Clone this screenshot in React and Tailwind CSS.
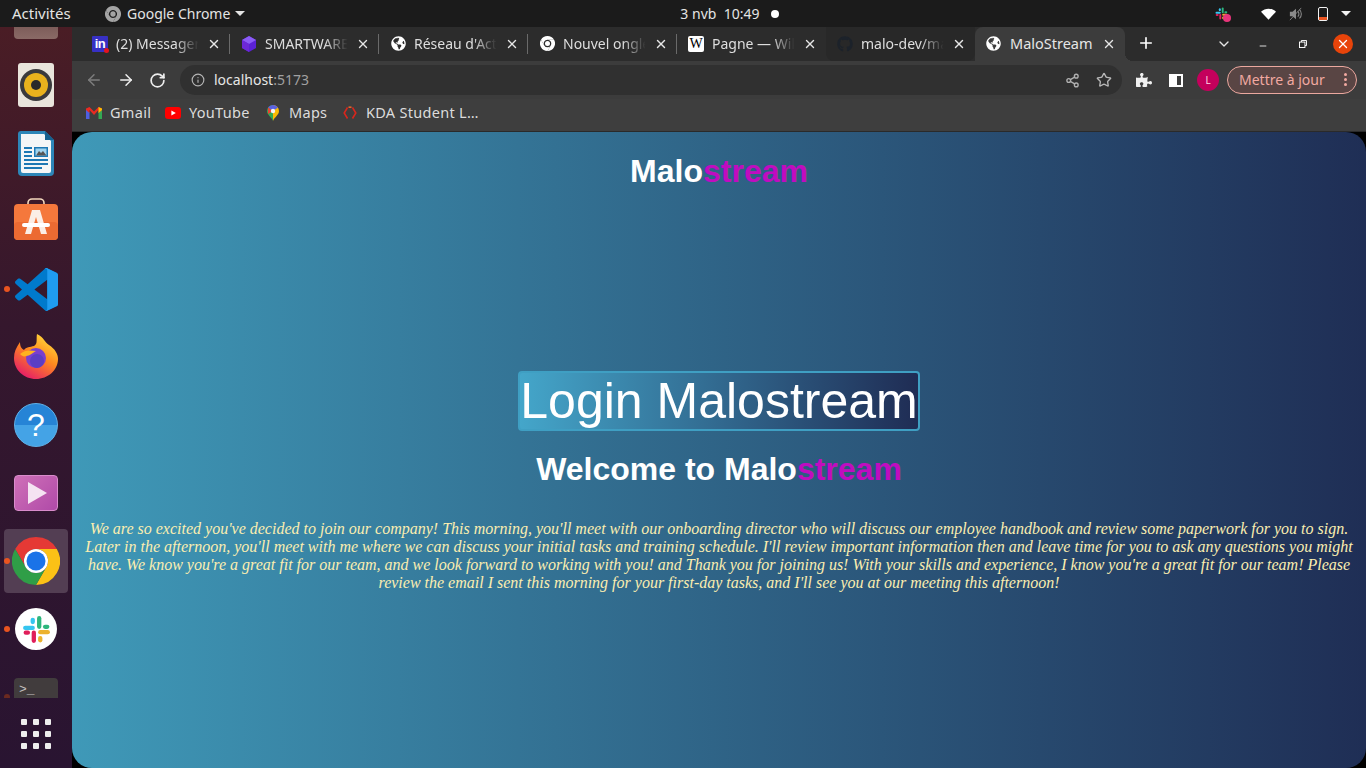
import React from "react";
import { ArrowLeft, ArrowRight, RotateCw, Info, Share2, Star, ChevronDown, Plus, X, Minus } from "lucide-react";
import { FaGlobeAmericas, FaGithub, FaPuzzlePiece } from "react-icons/fa";

const ChromeLogo = ({ className, mono }) => (
  <svg viewBox="0 0 48 48" className={className}>
    <path d="M24 0A24 24 0 0 0 3.2 12L13.6 30A12 12 0 0 1 24 12H44.8A24 24 0 0 0 24 0Z" fill={mono ? "#fff" : "#e53935"} />
    <path d="M44.8 12H24A12 12 0 0 1 34.4 30L24 48A24 24 0 0 0 44.8 12Z" fill={mono ? "#fff" : "#fbc116"} />
    <path d="M3.2 12A24 24 0 0 0 24 48L34.4 30A12 12 0 0 1 13.6 30Z" fill={mono ? "#fff" : "#2f9e47"} />
    {!mono && <circle cx="24" cy="24" r="12" fill="#fff" />}
    <circle cx="24" cy="24" r={mono ? 8 : 9.5} fill={mono ? "#fff" : "#1a73e8"} />
  </svg>
);

const LinkedIn = () => (
  <div className="relative w-4 h-4 bg-[#3730c4] rounded-[1px] flex items-center justify-center font-['Liberation_Sans',sans-serif] font-bold text-white text-[13px] leading-none tracking-[-0.5px]">
    in
    <span className="absolute -right-[1px] -bottom-[1px] w-[5px] h-[5px] rounded-full bg-[#e5131d]" />
  </div>
);

const Hex = () => (
  <svg viewBox="0 0 16 16" className="w-4 h-4">
    <path d="M8 0L15 4V12L8 16L1 12V4Z" fill="#5b21d6" />
    <path d="M8 0L15 4L8 8L1 4Z" fill="#8b5cf6" />
    <path d="M8 8V16L1 12V4Z" fill="#6d28d9" />
  </svg>
);

const Wiki = () => (
  <div className="w-4 h-4 bg-white rounded-[2px] flex items-center justify-center font-['Liberation_Serif',serif] text-black text-[14px] leading-none">W</div>
);

const tabs = [
  { icon: <LinkedIn />, title: "(2) Messagerie | LinkedIn" },
  { icon: <Hex />, title: "SMARTWARE Technology" },
  { icon: <FaGlobeAmericas className="w-[15px] h-[15px] text-white" />, title: "Réseau d'Activité" },
  { icon: <ChromeLogo className="w-[15px] h-[15px]" mono />, title: "Nouvel onglet Chrome" },
  { icon: <Wiki />, title: "Pagne — Wikipédia" },
  { icon: <FaGithub className="w-4 h-4 text-[#1c222a]" />, title: "malo-dev/malostream", hover: true },
];

const Tab = ({ icon, title, hover, last }) => (
  <div className={`relative w-[149px] h-[34px] shrink-0 flex items-center pl-[11px] pr-[9px] pb-[1px] ${hover ? "bg-[#282828] rounded-b-lg" : ""}`}>
    <div className="w-4 h-4 flex items-center justify-center shrink-0">{icon}</div>
    <div className="ml-[8px] mr-[2px] w-[89px] overflow-hidden whitespace-nowrap text-[14px] text-[#dedede] [mask-image:linear-gradient(to_right,black_68%,transparent_94%)]">{title}</div>
    <X className="ml-[1px] w-[14px] h-[14px] text-[#e6e6e6] shrink-0" strokeWidth={2.4} />
    {!last && <span className="absolute right-0 top-[7px] h-[20px] w-px bg-[#6a6a6a]" />}
  </div>
);

const ActiveTab = () => (
  <div className="relative w-[150px] h-[34px] shrink-0 flex items-center pl-[11px] pr-[9px] pb-[1px] bg-[#3c3c3c] rounded-t-lg">
    <FaGlobeAmericas className="w-[15px] h-[15px] text-white shrink-0" />
    <div className="ml-[9px] w-[90px] overflow-hidden whitespace-nowrap text-[14.5px] text-[#e6e6e6]">MaloStream</div>
    <X className="ml-[2px] w-[14px] h-[14px] text-[#e6e6e6] shrink-0" strokeWidth={2.4} />
    <span className="absolute -right-2 bottom-0 w-2 h-2 bg-[radial-gradient(circle_at_100%_0,transparent_8px,#3c3c3c_8px)]" />
  </div>
);

const Bookmark = ({ icon, children, w }) => (
  <div className={`flex items-center gap-[8px] ${w}`}>
    <div className="w-4 h-4 flex items-center justify-center shrink-0">{icon}</div>
    <span className="text-[14.5px] tracking-[0.3px] text-[#dcdcdc] whitespace-nowrap">{children}</span>
  </div>
);

const Gmail = () => (
  <svg viewBox="0 0 16 12" className="w-4 h-3">
    <path d="M0 2V12H3.5V5Z" fill="#4e5fe0" />
    <path d="M16 2V12H12.5V5Z" fill="#34a853" />
    <path d="M0 1.5L3.5 0L8 4.5L12.5 0L16 1.5V3L12.5 6V3L8 8L3.5 3V6L0 3Z" fill="#ea2a22" />
    <path d="M12.5 0L16 1.5V3L12.5 6Z" fill="#fbbc04" />
  </svg>
);
const YT = () => (
  <svg viewBox="0 0 16 12" className="w-4 h-3">
    <rect width="16" height="12" rx="3" fill="#f00" />
    <path d="M6.4 3.4L10.8 6L6.4 8.6Z" fill="#fff" />
  </svg>
);
const Maps = () => (
  <svg viewBox="0 0 12 16" className="w-3 h-4">
    <path d="M6 0A6 6 0 0 0 0 6C0 10 4.5 12 6 16Z" fill="#34a853" />
    <path d="M6 0A6 6 0 0 1 12 6C12 10 7.5 12 6 16Z" fill="#fbbc04" />
    <path d="M1 2.6A6 6 0 0 1 6 0A6 6 0 0 1 11 2.6L6 6Z" fill="#5a62e0" />
    <path d="M1 2.6L6 6L1 9Z" fill="#ea4335" />
    <circle cx="6" cy="6" r="2.2" fill="#f4f4f4" />
  </svg>
);
const KDA = () => (
  <svg viewBox="0 0 14 14" className="w-[14px] h-[14px]" fill="none" stroke="#d8261c" strokeWidth="1.6">
    <path d="M4.5 1.5L1.2 7L4.5 12.5" />
    <path d="M9.5 1.5L12.8 7L9.5 12.5" />
    <path d="M5.5 1.2H8.5" stroke="#e8632a" />
  </svg>
);

const Dock = ({ children, dot, active, dim }) => (
  <div className="relative h-[68px] w-[72px] shrink-0 flex items-center justify-center">
    {active && <div className="absolute left-1 top-[2px] w-[64px] h-[64px] rounded-[4px] bg-[#533e53]" />}
    {dot && <span className={`absolute left-[4px] top-[31px] w-[6px] h-[6px] rounded-full ${dim ? "bg-[#6b2a20]" : "bg-[#e95420]"}`} />}
    <div className="relative flex items-center justify-center">{children}</div>
  </div>
);

const Slack = ({ className }) => (
  <svg viewBox="0 0 54 54" className={className}>
    <g fill="#36c5f0">
      <rect x="2" y="20" width="22" height="8" rx="4" /><rect x="16" y="5" width="8" height="12" rx="4" />
    </g>
    <g fill="#2eb67d">
      <rect x="28" y="2" width="8" height="24" rx="4" /><rect x="39" y="18" width="12" height="8" rx="4" />
    </g>
    <g fill="#ecb22e">
      <rect x="30" y="28" width="22" height="8" rx="4" /><rect x="30" y="39" width="8" height="12" rx="4" />
    </g>
    <g fill="#e01e5a">
      <rect x="18" y="29" width="8" height="23" rx="4" /><rect x="3" y="29" width="12" height="8" rx="4" />
    </g>
  </svg>
);

const Paragraph =
  "We are so excited you've decided to join our company! This morning, you'll meet with our onboarding director who will discuss our employee handbook and review some paperwork for you to sign. Later in the afternoon, you'll meet with me where we can discuss your initial tasks and training schedule. I'll review important information then and leave time for you to ask any questions you might have. We know you're a great fit for our team, and we look forward to working with you! and Thank you for joining us! With your skills and experience, I know you're a great fit for our team! Please review the email I sent this morning for your first-day tasks, and I'll see you at our meeting this afternoon!";

export default function App() {
  return (
    <div className="h-screen w-full overflow-hidden flex flex-col bg-black font-['Noto_Sans',sans-serif]">
      {/* GNOME top bar */}
      <div className="h-[27px] shrink-0 bg-[#1b1b1b] flex items-center text-[14px] text-[#e4e4e4] relative">
        <span className="ml-3 w-[93px] text-[15px]">Activités</span>
        <ChromeLogo className="w-4 h-4 opacity-60" mono />
        <span className="ml-[6px]">Google Chrome</span>
        <span className="ml-[5px] w-0 h-0 border-x-[5px] border-x-transparent border-t-[5px] border-t-[#e4e4e4]" />
        <div className="ml-[435px] flex items-center">
          <span className="w-[78px] whitespace-pre">3 nvb  10:49</span>
          <span className="ml-[13px] w-2 h-2 rounded-full bg-white" />
        </div>
        <div className="flex-1" />
        <div className="relative w-4 h-4 mr-[30px]">
          <Slack className="w-[13px] h-[13px] mt-px" />
          <span className="absolute right-0 bottom-0 w-2 h-2 rounded-full bg-[#e8357a]" />
        </div>
        <svg viewBox="0 0 16 12" className="w-[15px] h-[12px] mr-[13px]"><path d="M0 3.5C4.5-.8 11.5-.8 16 3.5L8 12Z" fill="#fff" /></svg>
        <svg viewBox="0 0 16 16" className="w-[14px] h-[14px] mr-[15px]" fill="#8a8a8a"><path d="M1 5.5H4L8 2V14L4 10.5H1Z" /><path d="M10 5A4 4 0 0 1 10 11M12 3A7 7 0 0 1 12 13" fill="none" stroke="#8a8a8a" strokeWidth="1.2" /><path d="M1 15L14 1" stroke="#8a8a8a" strokeWidth="1" /></svg>
        <div className="relative w-[10px] h-[14px] rounded-[2px] border border-[#f2f2f2] mr-[13px]">
          <span className="absolute left-0 right-0 bottom-0 h-[3px] bg-[#e95420]" />
        </div>
        <span className="mr-[15px] w-0 h-0 border-x-[5px] border-x-transparent border-t-[5px] border-t-[#f2f2f2]" />
      </div>

      <div className="flex-1 min-h-0 flex">
        {/* Dock */}
        <div className="w-[72px] shrink-0 flex flex-col bg-[linear-gradient(to_bottom,#4a1d25_0%,#35172d_40%,#291431_100%)]">
          <div className="flex-1 min-h-0 overflow-hidden flex flex-col">
            <div className="-mt-[44px] shrink-0 relative h-[68px] flex items-center justify-center">
              <div className="w-[44px] h-[44px] rounded-[4px] bg-[linear-gradient(to_bottom,#5c3a3a,#8a6a66)]" />
            </div>
            <Dock>
              <div className="w-[36px] h-[44px] rounded-[3px] bg-[#e9e5dc] flex items-center justify-center">
                <div className="w-[32px] h-[32px] rounded-full bg-[#3a3a3c] flex items-center justify-center">
                  <div className="w-[24px] h-[24px] rounded-full bg-[#e9b21d] flex items-center justify-center">
                    <div className="w-[10px] h-[10px] rounded-full bg-[#2a2a2a]" />
                  </div>
                </div>
              </div>
            </Dock>
            <Dock>
              <svg viewBox="0 0 36 45" className="w-[36px] h-[45px]">
                <path d="M3 0H27L36 9V41A4 4 0 0 1 32 45H4A4 4 0 0 1 0 41V3A3 3 0 0 1 3 0Z" fill="#2d86b8" />
                <path d="M3 3H26L33 10V40A2 2 0 0 1 31 42H5A2 2 0 0 1 3 40Z" fill="#f4f6f7" />
                <path d="M27 0L36 9H27Z" fill="#15608e" />
                <g fill="#1d78b4">
                  <rect x="6" y="16" width="8" height="2" /><rect x="6" y="20" width="8" height="2" /><rect x="6" y="24" width="8" height="2" />
                  <rect x="6" y="28" width="24" height="2" /><rect x="6" y="32" width="24" height="2" /><rect x="6" y="36" width="18" height="2" />
                  <rect x="16" y="16" width="14" height="10" />
                </g>
                <rect x="17.5" y="17.5" width="11" height="7" fill="#9fd3ee" />
                <path d="M18 24.5L21 20L23 22L25 20L28.5 24.5Z" fill="#555" />
              </svg>
            </Dock>
            <Dock>
              <svg viewBox="0 0 44 44" className="w-[44px] h-[44px] -mt-[2px]">
                <path d="M14 8V5A4 4 0 0 1 18 1H26A4 4 0 0 1 30 5V8" fill="none" stroke="#f3d8bd" strokeWidth="1.6" />
                <rect y="6" width="44" height="36" rx="4" fill="#f5783c" />
                <rect y="24" width="44" height="18" rx="4" fill="#ec6a32" />
                <path d="M18 12H26L33 36H27L22 19L17 36H11Z" fill="#fbeee6" />
                <rect x="8" y="25" width="28" height="4" rx="2" fill="#fff" />
              </svg>
            </Dock>
            <Dock dot>
              <svg viewBox="0 0 100 100" className="w-[43px] h-[43px]">
                <path d="M70.9 99.3C72.5 99.9 74.3 99.9 75.9 99.1L96.5 89.2C98.6 88.2 100 86 100 83.6V16.4C100 14 98.6 11.8 96.5 10.8L75.9.9C73.8-.1 71.3.1 69.5 1.4C69.3 1.6 69 1.8 68.8 2.1L29.4 38L12.2 25C10.6 23.8 8.4 23.9 6.9 25.2L1.4 30.3C-.5 31.9-.5 34.8 1.4 36.4L16.2 50L1.4 63.6C-.5 65.2-.5 68.1 1.4 69.7L6.9 74.8C8.4 76.1 10.6 76.2 12.2 75L29.4 62L68.8 97.9C69.4 98.5 70.1 99 70.9 99.3ZM75 27.3L45.1 50L75 72.7Z" fill="#007acc" fillRule="evenodd" />
                <path d="M70.9 99.3C72.5 99.9 74.3 99.9 75.9 99.1L96.5 89.2C98.6 88.2 100 86 100 83.6V16.4C100 14 98.6 11.8 96.5 10.8L75.9.9C73.8-.1 71.3.1 69.5 1.4C72 .5 75 2.5 75 6V94C75 97.5 72.8 99.5 70.9 99.3Z" fill="#1f9cf0" />
              </svg>
            </Dock>
            <Dock>
              <svg viewBox="0 0 44 46" className="w-[44px] h-[46px] -mt-[1px]">
                <defs>
                  <linearGradient id="ff1" x1="0.8" y1="0" x2="0.2" y2="1"><stop offset="0" stopColor="#ffe23d" /><stop offset="0.45" stopColor="#ff8a1f" /><stop offset="1" stopColor="#e3136e" /></linearGradient>
                </defs>
                <path d="M22 45C10 45 0 36 0 24C0 18 2 14 6 8C6 13 8 15 10 16C12 13 16 13 20 12C24 10 22 5 23 0C31 4 30 8 35 11C41 15 44 20 44 25C44 36 34 45 22 45Z" fill="url(#ff1)" />
                <circle cx="22" cy="24" r="10" fill="#7a3fcf" />
                <circle cx="23" cy="27" r="7" fill="#5b3ec4" />
                <path d="M6 20C10 16 16 16 22 17C18 19 16 22 12 22C10 23 8 22 6 20Z" fill="#ffb31f" />
              </svg>
            </Dock>
            <Dock>
              <div className="w-[44px] h-[44px] rounded-full bg-[linear-gradient(to_bottom,#2684d6_50%,#44a3e6_50%)] border border-[#5fb2ea] flex items-center justify-center text-white text-[32px] leading-none font-['Liberation_Sans',sans-serif]">?</div>
            </Dock>
            <Dock>
              <div className="w-[44px] h-[36px] rounded-[4px] border border-[#d98ccb] bg-[linear-gradient(135deg,#cf70b8,#b04aa8)] flex items-center justify-center">
                <div className="w-0 h-0 ml-[3px] border-y-[11px] border-y-transparent border-l-[19px] border-l-[#f5e3f2]" />
              </div>
            </Dock>
            <Dock dot active>
              <ChromeLogo className="w-12 h-12" />
            </Dock>
            <Dock dot>
              <div className="w-[42px] h-[42px] rounded-full bg-white flex items-center justify-center">
                <Slack className="w-[29px] h-[29px]" />
              </div>
            </Dock>
            <Dock dot dim>
              <div className="w-[44px] h-[36px] rounded-[4px] bg-[#413c3d] text-[#c4c0c0] text-[13px] font-['Liberation_Mono',monospace] leading-none pl-[5px] pt-[5px] self-start mt-[-2px]">&gt;_</div>
            </Dock>
          </div>
          <div className="h-[70px] shrink-0 grid grid-cols-3 gap-[6px] w-[30px] mx-auto content-center pt-[2px]">
            {[0, 1, 2, 3, 4, 5, 6, 7, 8].map((i) => (
              <span key={i} className="w-[6px] h-[6px] rounded-[1px] bg-[#eeeeee]" />
            ))}
          </div>
        </div>

        {/* Chrome window */}
        <div className="flex-1 min-w-0 flex flex-col bg-black">
          <div className="h-[34px] shrink-0 bg-[#2c2c2c] flex items-center pl-[9px]">
            {tabs.map((t, i) => (
              <Tab key={i} {...t} last={i >= 4} />
            ))}
            <ActiveTab />
            <Plus className="ml-[12px] w-[18px] h-[18px] text-white mb-[2px]" strokeWidth={2.2} />
            <div className="flex-1" />
            <ChevronDown className="w-[16px] h-[16px] text-[#e6e6e6] mr-[26px] mb-[1px]" strokeWidth={2} />
            <Minus className="w-[10px] h-[10px] text-white mr-[31px] mt-[3px]" strokeWidth={2} />
            <svg viewBox="0 0 10 10" className="w-[8px] h-[8px] mr-[26px]" fill="none" stroke="#fff" strokeWidth="1.2"><rect x="0.6" y="2.6" width="6.8" height="6.8" /><path d="M3 2.5V.6H9.4V7H7.5" /></svg>
            <div className="w-5 h-5 rounded-full bg-[#e8440a] flex items-center justify-center mr-[13px]">
              <X className="w-[14px] h-[14px] text-white" strokeWidth={2.2} />
            </div>
          </div>

          <div className="h-[38px] shrink-0 bg-[#3c3c3c] flex items-center pl-[13px]">
            <ArrowLeft className="w-[18px] h-[18px] text-[#7d7d7d]" strokeWidth={2} />
            <ArrowRight className="ml-[14px] w-[18px] h-[18px] text-[#eeeeee]" strokeWidth={2} />
            <RotateCw className="ml-[14px] w-[17px] h-[17px] text-[#eeeeee]" strokeWidth={2.4} />
            <div className="ml-[14px] w-[942px] h-[30px] rounded-full bg-[#303030] flex items-center pl-[11px] pr-[10px]">
              <Info className="w-[14px] h-[14px] text-[#b4b4b4]" strokeWidth={2} />
              <span className="ml-[9px] text-[14px] text-[#e6e6e6] pb-[1px]">localhost<span className="text-[#a0a0a0]">:5173</span></span>
              <div className="flex-1" />
              <Share2 className="w-[15px] h-[15px] text-[#b0b0b0]" strokeWidth={2.2} />
              <Star className="ml-[16px] w-[16px] h-[16px] text-[#b8b8b8]" strokeWidth={2} />
            </div>
            <FaPuzzlePiece className="ml-[14px] w-[16px] h-[16px] text-[#f0f0f0]" />
            <div className="ml-[17px] w-[14px] h-[13px] border-2 border-white border-l-[8px] bg-transparent" />
            <div className="ml-[14px] w-[22px] h-[22px] rounded-full bg-[#c4005c] flex items-center justify-center text-[10px] text-[#ffd5e5]">L</div>
            <div className="ml-[8px] w-[130px] h-[28px] rounded-full border border-[#eba89f] bg-[#594544] flex items-center pl-[11px] pb-[1px] text-[14px] text-[#f2a9a1] relative">
              <span className="whitespace-nowrap">Mettre à jour</span>
              <div className="ml-auto mr-[9px] flex flex-col gap-[2px]">
                <span className="w-[3px] h-[3px] rounded-full bg-[#f2a9a1]" />
                <span className="w-[3px] h-[3px] rounded-full bg-[#f2a9a1]" />
                <span className="w-[3px] h-[3px] rounded-full bg-[#f2a9a1]" />
              </div>
            </div>
          </div>

          <div className="h-[33px] shrink-0 bg-[#3e3e3e] border-b border-[#2a2a2a] flex items-center pl-[14px] pb-[5px]">
            <Bookmark icon={<Gmail />} w="w-[79px]">Gmail</Bookmark>
            <Bookmark icon={<YT />} w="w-[100px]">YouTube</Bookmark>
            <Bookmark icon={<Maps />} w="w-[77px]">Maps</Bookmark>
            <Bookmark icon={<KDA />} w="w-[150px]">KDA Student L…</Bookmark>
          </div>

          {/* Page */}
          <div className="flex-1 min-h-0 rounded-[20px] bg-[linear-gradient(to_right,#3f99b8,#1f2e55)] flex flex-col items-center overflow-hidden font-['Liberation_Sans',sans-serif]">
            <h1 className="mt-[21px] text-[32px] leading-[37px] font-bold text-white">
              Malo<span className="text-[#c00cc0]">stream</span>
            </h1>
            <div className="mt-[181px] h-[60px] border-2 border-[#3f9fc3] rounded-[4px] bg-[linear-gradient(to_right,#44a6ca,#1f2c54)] flex items-center text-[50px] leading-[56px] text-white whitespace-nowrap">
              Login Malostream
            </div>
            <h2 className="mt-[20px] text-[32px] leading-[37px] font-bold text-white">
              Welcome to Malo<span className="text-[#c00cc0]">stream</span>
            </h2>
            <p className="mt-[32px] px-[12px] text-center italic text-[16px] leading-[18px] text-[#fbeeb0] font-['Liberation_Serif',serif]">
              {Paragraph}
            </p>
          </div>
        </div>
      </div>
    </div>
  );
}
